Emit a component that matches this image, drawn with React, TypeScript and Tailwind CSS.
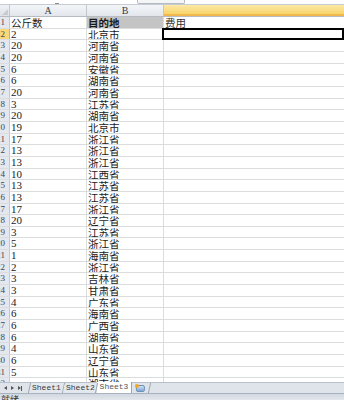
import React from 'react';

const rows: [string, string][] = [
  ['2', '北京市'],
  ['20', '河南省'],
  ['20', '河南省'],
  ['6', '安徽省'],
  ['6', '湖南省'],
  ['20', '河南省'],
  ['3', '江苏省'],
  ['20', '湖南省'],
  ['19', '北京市'],
  ['17', '浙江省'],
  ['13', '浙江省'],
  ['13', '浙江省'],
  ['10', '江西省'],
  ['13', '江苏省'],
  ['13', '江苏省'],
  ['17', '浙江省'],
  ['20', '辽宁省'],
  ['3', '江苏省'],
  ['5', '浙江省'],
  ['1', '海南省'],
  ['2', '浙江省'],
  ['3', '吉林省'],
  ['3', '甘肃省'],
  ['4', '广东省'],
  ['6', '海南省'],
  ['6', '广西省'],
  ['6', '湖南省'],
  ['4', '山东省'],
  ['6', '辽宁省'],
  ['5', '山东省'],
  ['', '湖南省'],
];

const serif = { fontFamily: '"Liberation Serif", "Noto Sans CJK SC", serif' };
const cjk = { fontFamily: '"Noto Sans CJK SC", sans-serif' };

const App: React.FC = () => {
  return (
    <div className="w-[344px] h-[400px] overflow-hidden bg-white flex flex-col text-[11px] text-[#1a1a1a]" style={serif}>
      {/* formula bar remnant */}
      <div className="h-[5px] shrink-0 bg-white flex items-end border-b border-[#c7ccd4]">
        <div className="ml-[55px] h-[3px] w-[4px] border-b border-[#8a8a8a]" />
        <div className="ml-[78px] h-[5px] w-[48px] border border-t-0 border-[#b4bac4] rounded-b-[2px] bg-[#f4f5f7]" />
      </div>

      {/* column headers */}
      <div className="h-[12px] shrink-0 flex border-b border-[#b7bcc4] text-[10px] leading-[11px] text-[#3c3c3c]">
        <div className="w-[10px] shrink-0 border-r border-[#c3c8cf] bg-gradient-to-b from-[#eef1f5] to-[#dfe3e9] relative overflow-hidden">
          <div className="absolute right-[1px] bottom-[1px] w-0 h-0 border-l-[6px] border-l-transparent border-b-[6px] border-b-[#c8ccd2]" />
        </div>
        <div className="w-[77px] shrink-0 border-r border-[#c3c8cf] bg-gradient-to-b from-[#f3f5f8] to-[#e2e6ec] text-center">A</div>
        <div className="w-[77px] shrink-0 border-r border-[#c3c8cf] bg-gradient-to-b from-[#f3f5f8] to-[#e2e6ec] text-center">B</div>
        <div className="flex-1 bg-gradient-to-b from-[#fce9a6] to-[#f8d469] border-b-2 border-[#f2b84b]" />
      </div>

      {/* grid */}
      <div className="flex-1 min-h-0 overflow-hidden">
        <div className="flex h-[11.67px] border-b border-[#dadcdd]">
          <div className="w-[10px] shrink-0 bg-[#e4e8ee] border-r border-[#c3c8cf] text-[9px] leading-[11px] text-[#444] flex justify-end pr-[4px]">1</div>
          <div className="w-[77px] shrink-0 border-r border-[#dadcdd] pl-[1px] text-[10.5px] leading-[11px] overflow-hidden" style={cjk}>公斤数</div>
          <div className="w-[77px] shrink-0 border-r border-[#dadcdd] pl-[1px] text-[10.5px] leading-[11px] overflow-hidden bg-[#c4c4c4] font-bold" style={cjk}>目的地</div>
          <div className="flex-1 pl-[1px] text-[10.5px] leading-[11px] overflow-hidden text-[#333]" style={cjk}>费用</div>
        </div>
        {rows.map(([kg, dest], i) => {
          const n = i + 2;
          const sel = n === 2;
          return (
            <div key={n} className="flex h-[11.67px] border-b border-[#dadcdd]">
              <div
                className={
                  'w-[10px] shrink-0 border-r text-[9px] leading-[11px] text-[#444] overflow-hidden whitespace-nowrap flex justify-end pr-[4px] ' +
                  (sel ? 'bg-[#f9d77a] border-[#e8a33a]' : 'bg-[#e4e8ee] border-[#c3c8cf]')
                }
              >
                {n}
              </div>
              <div className="w-[77px] shrink-0 border-r border-[#dadcdd] pl-[1px] leading-[11px] overflow-hidden">{kg}</div>
              <div className="w-[77px] shrink-0 border-r border-[#dadcdd] pl-[1px] text-[10.5px] leading-[11px] overflow-hidden" style={cjk}>{dest}</div>
              <div className="flex-1 relative">
                {sel && <div className="absolute -left-[2px] -top-[1px] right-0 -bottom-[1px] border-2 border-black" />}
              </div>
            </div>
          );
        })}
      </div>

      {/* sheet tabs */}
      <div className="h-[11px] shrink-0 flex items-stretch bg-[#dfe4eb] border-t border-[#b9c0cb] text-[8px] leading-[10px] text-[#3a3a3a]" style={{ fontFamily: '"Liberation Mono", monospace' }}>
        <div className="w-[29px] shrink-0 flex items-center gap-[4px] pl-[4px]">
          <span className="w-0 h-0 border-y-[2.5px] border-y-transparent border-r-[3px] border-r-[#555]" />
          <span className="w-0 h-0 border-y-[2.5px] border-y-transparent border-l-[3px] border-l-[#555]" />
          <span className="flex items-center">
            <span className="w-0 h-0 border-y-[2.5px] border-y-transparent border-l-[3px] border-l-[#555]" />
            <span className="w-[1px] h-[5px] bg-[#555]" />
          </span>
        </div>
        <div className="w-[35px] shrink-0 border-l border-r border-[#9ba4b1] bg-[#e3e8ee] -skew-x-12 flex justify-center overflow-hidden">
          <span className="inline-block skew-x-12">Sheet1</span>
        </div>
        <div className="w-[33px] shrink-0 border-r border-[#9ba4b1] bg-[#e3e8ee] -skew-x-12 flex justify-center overflow-hidden">
          <span className="inline-block skew-x-12">Sheet2</span>
        </div>
        <div className="w-[35px] shrink-0 border-r border-[#9ba4b1] bg-white -mt-[1px] text-[#555] flex justify-center overflow-hidden">Sheet3</div>
        <div className="w-[18px] shrink-0 border-r border-[#9ba4b1] -skew-x-12 flex items-center justify-center">
          <span className="skew-x-12 w-[9px] h-[7px] rounded-[2px] bg-gradient-to-b from-[#cfe3f7] to-[#7ea6d2] border border-[#6b8fb9] relative">
            <span className="absolute -left-[2px] -top-[2px] w-[4px] h-[4px] rounded-full bg-[#f5a623]" />
          </span>
        </div>
        <div className="flex-1" />
      </div>

      {/* status bar */}
      <div className="h-[7px] shrink-0 bg-gradient-to-b from-[#d2d8e1] to-[#e3e7ed] border-t border-[#aab2be] overflow-hidden text-[9px] leading-[11px] pl-[1px] text-[#333]" style={cjk}>
        就绪
      </div>
    </div>
  );
};

export default App;
